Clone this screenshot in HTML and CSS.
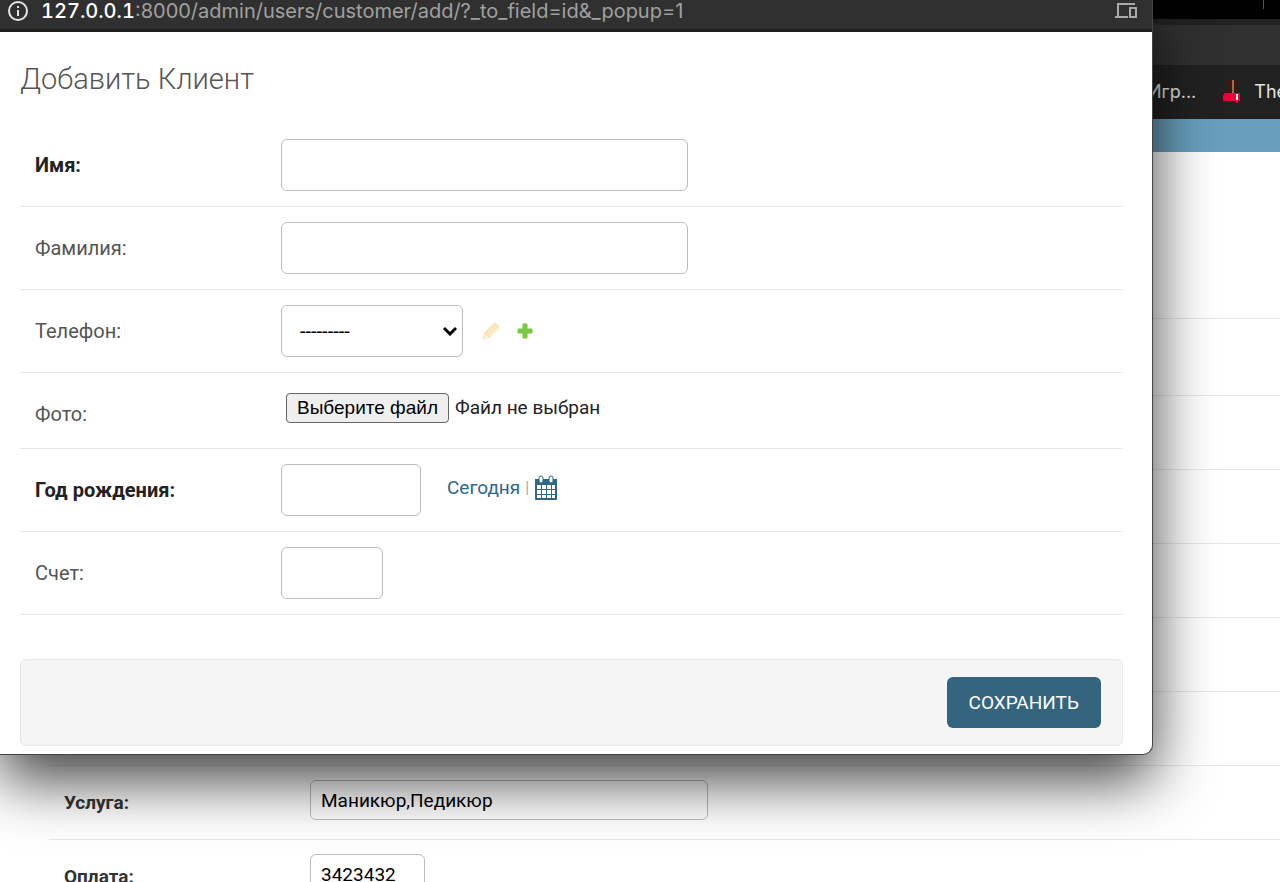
FILE: index.html
```html
<!DOCTYPE html>
<html lang="ru">

<head>
  <meta charset="UTF-8">
  <title>Добавить Клиент</title>
  <link rel="stylesheet" href="styles.css">
</head>

<body>
  <div class="browser">
    <div class="tabs"><span></span></div>
    <div class="toolbar"></div>
    <div class="bookmarks">
      <span>Игр...</span>
      <svg width="18" height="24" viewBox="0 0 18 24">
        <path d="M5 0h9v14H5z" fill="#3a1712" />
        <path d="M9 0h2v13H9z" fill="#a06a50" />
        <path d="M1 13h16v8h-2v2h-2v-2H0v-6h1z" fill="#e8003c" />
        <path d="M13 14h2v6h-2z" fill="#fff" />
      </svg>
      <span>The</span>
    </div>
    <div class="admin-header"></div>
    <form class="record">
      <div class="record-row spacer"></div>
      <div class="record-row tall"></div>
      <div class="record-row"></div>
      <div class="record-row"></div>
      <div class="record-row"></div>
      <div class="record-row"></div>
      <div class="record-row"></div>
      <div class="record-row">
        <label for="service">Услуга:</label>
        <input type="text" id="service" class="service" value="Маникюр,Педикюр">
      </div>
      <div class="record-row">
        <label for="payment">Оплата:</label>
        <input type="text" id="payment" class="payment" value="3423432">
      </div>
    </form>
  </div>

  <div class="popup">
    <div class="address">
      <svg width="20" height="20" viewBox="0 0 20 20">
        <circle cx="10" cy="10" r="9" fill="none" stroke="#e4e4e4" stroke-width="2" />
        <path d="M9 5h2v2H9zM9 9h2v6H9z" fill="#e4e4e4" />
      </svg>
      <div class="url"><b>127.0.0.1</b>:8000/admin/users/customer/add/?_to_field=id&amp;_popup=1</div>
      <svg width="24" height="18" viewBox="0 0 24 18" fill="none" stroke="#a9a9a9" stroke-width="2">
        <path d="M21 2H4v12M1 15h13" />
        <path d="M16 6h6v9h-6z" />
      </svg>
    </div>
    <form class="content">
      <h1>Добавить Клиент</h1>
      <div class="row">
        <label for="first" class="required">Имя:</label>
        <input type="text" id="first" class="long">
      </div>
      <div class="row">
        <label for="last">Фамилия:</label>
        <input type="text" id="last" class="long">
      </div>
      <div class="row">
        <label for="phone">Телефон:</label>
        <div class="related">
          <div class="select">
            <select id="phone">
              <option>---------</option>
            </select>
            <svg width="14" height="10" viewBox="0 0 14 10">
              <path d="M1 2l6 6 6-6" fill="none" stroke="#000" stroke-width="3" />
            </svg>
          </div>
          <a href="#" class="edit" aria-label="Изменить">
            <svg width="18" height="18" viewBox="0 0 18 18">
              <path d="M1 17l1-6L12 1h2l3 3v2L7 16z" fill="#f9e3b4" />
              <path d="M5 12l7-7M7 14l7-7M11 3l4 4" stroke="#fff6dd" fill="none" />
              <path d="M3 12l3 3-3 1z" fill="#fffaf0" />
            </svg>
          </a>
          <a href="#" aria-label="Добавить">
            <svg width="16" height="16" viewBox="0 0 16 16">
              <path d="M6 1h4v5h5v4h-5v5H6v-5H1V6h5z" fill="#7ac943" stroke="#7ac943" stroke-linejoin="round" />
            </svg>
          </a>
        </div>
      </div>
      <div class="row">
        <label for="photo">Фото:</label>
        <div class="file">
          <input type="file" id="photo">
          <label for="photo">Выберите файл</label>
          <span>Файл не выбран</span>
        </div>
      </div>
      <div class="row">
        <label for="birth" class="required">Год рождения:</label>
        <input type="text" id="birth" class="date">
        <div class="shortcuts">
          <a href="#">Сегодня</a>
          <span>|</span>
          <a href="#" aria-label="Календарь">
            <svg width="24" height="26" viewBox="0 0 24 26">
              <path d="M1 4h22v20q0 1-1 1H2q-1 0-1-1z" fill="#2f6886" />
              <path d="M3 10h4v4H3zM8 10h4v4H8zM13 10h4v4h-4zM18 10h3v4h-3zM3 15h4v4H3zM8 15h4v4H8zM13 15h4v4h-4zM18 15h3v4h-3zM3 20h4v3H3zM8 20h4v3H8zM13 20h4v3h-4zM18 20h3v3h-3z" fill="#fff" />
              <rect x="5" y="1" width="4" height="7" rx="2" fill="#fff" stroke="#2f6886" />
              <rect x="15" y="1" width="4" height="7" rx="2" fill="#fff" stroke="#2f6886" />
            </svg>
          </a>
        </div>
      </div>
      <div class="row">
        <label for="score">Счет:</label>
        <input type="text" id="score" class="short">
      </div>
      <div class="submit-row">
        <button type="submit">СОХРАНИТЬ</button>
      </div>
    </form>
  </div>
</body>

</html>
```

FILE: styles.css
```css
* {
  box-sizing: border-box;
}

body {
  margin: 0;
  height: 100vh;
  overflow: hidden;
  position: relative;
  background: #fff;
  color: #333;
  font-family: Roboto, sans-serif;
  font-size: 20px;
  line-height: 24px;
}

svg {
  display: block;
  flex: none;
}

a {
  color: #2f6886;
  text-decoration: none;
}

input,
select,
button {
  font: inherit;
  color: #000;
}

input[type=text],
select {
  background: #fff;
  border: 1px solid #bbb;
  border-radius: 6px;
}

/* main browser window */

.tabs {
  height: 25px;
  background: #000;
  border-bottom: 6px solid #222;
}

.tabs span {
  display: block;
  width: 1px;
  height: 9px;
  margin-left: auto;
  margin-right: 16px;
  background: #555;
}

.toolbar {
  height: 40px;
  background: #303030;
}

.bookmarks {
  display: flex;
  align-items: center;
  height: 54px;
  padding-left: calc(100% - 132px);
  background: #212121;
  color: #e4e4e4;
  font-family: Inter, sans-serif;
  font-size: 18px;
}

.bookmarks svg {
  margin: 0 13px 0 27px;
}

.admin-header {
  height: 33px;
  background: #689fbd;
}

.record {
  padding-left: 49px;
  font-size: 19px;
}

.record-row {
  display: flex;
  height: 74px;
  padding: 14px 15px 0;
  border-bottom: 1px solid #e8e8e8;
}

.record-row.spacer {
  height: 167px;
}

.record-row.tall {
  height: 77px;
}

.record-row label {
  width: 246px;
  padding-top: 11px;
  font-weight: bold;
}

.record-row input {
  height: 40px;
  padding: 0 10px;
}

.record-row .service {
  width: 398px;
  background: transparent;
}

.record-row .payment {
  width: 115px;
}

/* popup window, lies over the main one */

.popup {
  position: absolute;
  top: 0;
  left: 0;
  right: 127px;
  background: #fff;
  border-right: 1px solid #444;
  border-bottom: 1px solid #444;
  border-radius: 0 0 10px 0;
  box-shadow: 0 25px 60px rgba(0, 0, 0, .75);
}

.address {
  display: flex;
  align-items: center;
  height: 32px;
  padding: 0 14px 8px 8px;
  background: #303030;
  border-bottom: 3px solid #1f1f1f;
  color: #a0a0a0;
  font-family: Inter, sans-serif;
}

.url {
  flex: 1;
  margin-left: 13px;
}

.url b {
  color: #fff;
  font-weight: 500;
  font-variant-numeric: tabular-nums;
}

.content {
  padding: 30px 29px 8px 20px;
}

h1 {
  margin: 0 0 28px;
  color: #555;
  font-size: 29px;
  font-weight: 300;
  line-height: 34px;
}

.row {
  display: flex;
  align-items: flex-start;
  padding: 15px;
  border-bottom: 1px solid #e8e8e8;
}

.row > label {
  width: 246px;
  padding: 14px 0 7px;
  color: #555;
}

.row > label.required {
  color: #222;
  font-weight: bold;
}

.row input[type=text],
.row select {
  height: 52px;
  padding: 0 18px;
}

.row .long {
  width: 407px;
}

.row .date {
  width: 140px;
}

.row .short {
  width: 102px;
}

.related {
  display: flex;
  align-items: center;
}

.related .edit {
  margin: 0 17px 0 19px;
}

.select {
  position: relative;
}

.select select {
  width: 182px;
  appearance: none;
}

.select svg {
  position: absolute;
  top: 21px;
  right: 6px;
  pointer-events: none;
}

.file {
  position: relative;
  display: flex;
  align-items: center;
  gap: 6px;
  padding: 5px 0 0 5px;
  color: #222;
  font-size: 19px;
}

.file input {
  position: absolute;
  width: 1px;
  height: 1px;
  opacity: 0;
}

.file label {
  padding: 2px 10px;
  background: #efefef;
  border: 1px solid #666;
  border-radius: 4px;
  color: #000;
  font-family: "Liberation Sans", Arial, sans-serif;
}

.shortcuts {
  display: flex;
  align-items: center;
  gap: 5px;
  height: 48px;
  margin-left: 26px;
  font-size: 19px;
}

.shortcuts span {
  color: #aaa;
  font-size: 16px;
}

.submit-row {
  display: flex;
  justify-content: flex-end;
  margin-top: 44px;
  padding: 17px 21px;
  background: #f5f5f5;
  border: 1px solid #e8e8e8;
  border-radius: 6px;
}

.submit-row button {
  height: 51px;
  padding: 0 22px;
  background: #35647e;
  border: 0;
  border-radius: 6px;
  color: #fff;
  font-size: 19px;
}
```
